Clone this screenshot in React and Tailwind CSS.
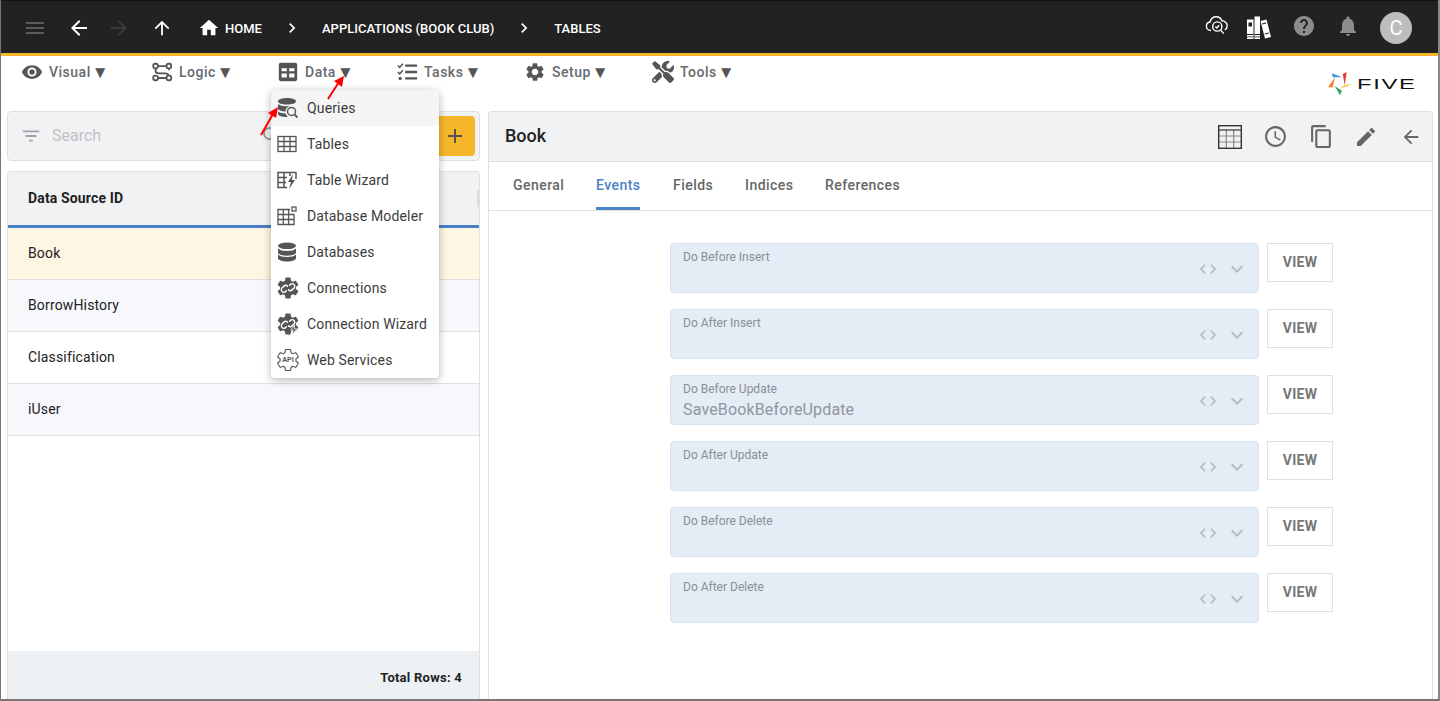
import {
  MdMenu, MdArrowBack, MdArrowForward, MdArrowUpward, MdHome, MdChevronRight, MdHelp, MdNotifications,
  MdVisibility, MdSettings, MdFilterList, MdSearch, MdAdd, MdAccessTime, MdContentCopy,
  MdEdit, MdCode, MdExpandMore,
} from 'react-icons/md';
import { FaTools } from 'react-icons/fa';

const GEAR = 'M19.14 12.94c.04-.3.06-.61.06-.94 0-.32-.02-.64-.07-.94l2.03-1.58c.18-.14.23-.41.12-.61l-1.92-3.32c-.12-.22-.37-.29-.59-.22l-2.39.96c-.5-.38-1.03-.7-1.62-.94l-.36-2.54c-.04-.24-.24-.41-.48-.41h-3.84c-.24 0-.43.17-.47.41l-.36 2.54c-.59.24-1.13.57-1.62.94l-2.39-.96c-.22-.08-.47 0-.59.22L2.74 8.87c-.12.21-.08.47.12.61l2.03 1.58c-.05.3-.09.63-.09.94s.02.64.07.94l-2.03 1.58c-.18.14-.23.41-.12.61l1.92 3.32c.12.22.37.29.59.22l2.39-.96c.5.38 1.03.7 1.62.94l.36 2.54c.05.24.24.41.48.41h3.84c.24 0 .44-.17.47-.41l.36-2.54c.59-.24 1.13-.56 1.62-.94l2.39.96c.22.08.47 0 .59-.22l1.92-3.32c.12-.22.07-.47-.12-.61l-2.01-1.58z';

const LogicIcon = () => (
  <svg viewBox="0 0 24 24" className="w-[22px] h-[22px]" fill="none" stroke="#555" strokeWidth="2">
    <rect x="2.500" y="3" width="5" height="5" rx="2" />
    <rect x="17" y="3" width="5" height="5" rx="2" />
    <rect x="2.500" y="16" width="5" height="5" rx="2" />
    <rect x="17" y="16" width="5" height="5" rx="2" />
    <path d="M7.500 5.500H17M5 8v3c0 2 2 2.500 4 2.500h6c2 0 4 .5 4 2.500M7.500 18.500H17M19.500 8v2" />
  </svg>
);

const DataIcon = () => (
  <svg viewBox="0 0 24 24" className="w-[22px] h-[22px]">
    <path fillRule="evenodd" fill="#555" d="M4 2h16a2 2 0 0 1 2 2v16a2 2 0 0 1-2 2H4a2 2 0 0 1-2-2V4a2 2 0 0 1 2-2zm1 6v3.300h5.700V8H5zm8.300 0v3.300H19V8h-5.700zM5 13.700V18h5.700v-4.300H5zm8.300 0V18H19v-4.300h-5.700z" />
  </svg>
);

const TasksIcon = () => (
  <svg viewBox="0 0 24 24" className="w-[22px] h-[22px]" fill="none" stroke="#555">
    <path strokeWidth="2.500" d="M10 5h13M10 12h13M10 19h13" />
    <path strokeWidth="1.600" d="M2 5l2 2 3.500-4M2 12l2 2 3.500-4" />
    <circle cx="4.500" cy="19" r="1.800" fill="#555" stroke="none" />
  </svg>
);

const CloudIcon = () => (
  <svg viewBox="0 0 24 24" className="w-[24px] h-[24px]" fill="none" stroke="#fff" strokeWidth="1.400">
    <path d="M6 17.500c-2.600 0-4.600-1.800-4.600-4.300 0-2.200 1.500-3.900 3.600-4.200C5.800 6 8.200 3.800 11.200 3.800c2.600 0 4.800 1.600 5.700 4 2.800.1 5.300 2.200 5.300 5 0 1.700-.9 3.300-2.400 4.100" />
    <circle cx="12.300" cy="13.500" r="4.600" />
    <path d="M10.400 13.500l1.400 1.400 2.400-2.600M15.600 17l3.200 3.600" />
  </svg>
);

const BooksIcon = () => (
  <svg viewBox="0 0 26 26" className="w-[26px] h-[26px]">
    <path fill="#fff" d="M1 4.500h6.500V24H1zM8.500 1.500H14V24H8.500z" />
    <path fill="#fff" d="M14.500 6l6-1.500L25 22l-6 1.500z" />
    <path fill="#222" d="M2.500 7.500h3.500v4H2.500zM1 19h6.500v1H1zM1 21.500h6.500v.8H1zM8.500 19H14v1H8.500zM8.500 21.500H14v.8H8.500zM16 8.500l4-1 .3 1-4 1zM18.700 18.500l4-1 .3 1-4 1z" />
  </svg>
);

const TableGrid = () => (
  <svg viewBox="0 0 20 20" className="w-[20px] h-[20px]" fill="none" stroke="#555" strokeWidth="1.300">
    <path d="M1 7.500h18M1 12.500h18M7 2.500v15M13 2.500v15" />
    <rect x="1" y="2.500" width="18" height="15" />
  </svg>
);

const HeaderTable = () => (
  <svg viewBox="0 0 24 24" className="w-[24px] h-[24px]" fill="none">
    <path stroke="#888" strokeWidth="1.200" d="M1 11h22M1 17h22M8.300 5v18M15.700 5v18" />
    <path stroke="#333" strokeWidth="1.200" d="M1 5h22" />
    <rect x="0.700" y="0.700" width="22.600" height="22.600" stroke="#333" strokeWidth="1.400" />
  </svg>
);

const QueriesIcon = () => (
  <svg viewBox="0 0 22 22" className="w-[22px] h-[22px]">
    <path fill="#555" d="M10 1c5 0 9 1.300 9 3.300S15 7.600 10 7.600 1 6.300 1 4.300 5 1 10 1zM1 7c1.500 1.600 5 2.300 9 2.300 1 0 2-.1 3-.2-2.500.6-4.500 2.800-4.500 5.400H8C5 14.300 2.300 13.600 1 12.300zM1 14.500c1.400 1.300 4.300 2 7.600 2 .3 1.100 1 2.200 1.800 3-.2.500-.4.500-.4.500-5 0-9-1.300-9-3.300z" />
    <circle cx="14.500" cy="14.500" r="4" fill="none" stroke="#555" strokeWidth="1.500" />
    <path d="M17.500 17.500l3 3" stroke="#555" strokeWidth="1.800" />
  </svg>
);

const WizardIcon = () => (
  <svg viewBox="0 0 20 20" className="w-[20px] h-[20px]">
    <g fill="none" stroke="#555" strokeWidth="1.500">
      <path d="M10 17.500H1v-15h18V9M1 7.500h9M1 12.500h8M7 2.500v15M13 2.500V6" />
    </g>
    <path fill="#555" d="M16 4l-5 8h3l-2 7 6-9h-3.200z" />
  </svg>
);

const ModelerIcon = () => (
  <svg viewBox="0 0 20 20" className="w-[20px] h-[20px]" fill="none" stroke="#555" strokeWidth="1.300">
    <path d="M13 3.500H1v15h16V8M1 8.500h16M1 13.500h16M6.300 3.500v15M11.600 3.500v15" />
    <rect x="15" y="1" width="4" height="4" />
  </svg>
);

const DatabaseIcon = () => (
  <svg viewBox="0 0 20 20" className="w-[20px] h-[20px]" fill="#555">
    <ellipse cx="10" cy="3.800" rx="9" ry="3.300" />
    <path d="M1 6.500c1.500 1.700 5 2.500 9 2.500s7.500-.8 9-2.500v4c0 1.800-4 3.200-9 3.200s-9-1.400-9-3.200z" />
    <path d="M1 12.600c1.500 1.700 5 2.500 9 2.500s7.500-.8 9-2.500v3.600c0 1.800-4 3.200-9 3.200s-9-1.400-9-3.200z" />
  </svg>
);

const ConnectionIcon = ({ bolt }) => (
  <svg viewBox="2 2 20 20" className="w-[22px] h-[22px]">
    <path fill="#555" d={GEAR} />
    <circle cx="12" cy="12" r="6" fill="#555" />
    <g fill="none" stroke="#fff" strokeWidth="1.300" strokeLinecap="round">
      <path d="M10.500 14.500l-1 1a2.300 2.300 0 0 1-3.200-3.200l2-2a2.300 2.300 0 0 1 3.200 0" />
      <path d="M13.500 9.500l1-1a2.300 2.300 0 0 1 3.200 3.200l-2 2a2.300 2.300 0 0 1-3.200 0" />
    </g>
    {bolt && <path fill="#555" stroke="#fff" strokeWidth="0.700" d="M18 13l-3.500 4.500h2.200L15.500 22l4.500-5.500h-2.200z" />}
  </svg>
);

const ApiIcon = () => (
  <svg viewBox="2 2 20 20" className="w-[22px] h-[22px]">
    <path fill="none" stroke="#555" strokeWidth="1" d={GEAR} />
    <text x="12" y="14.200" textAnchor="middle" fontSize="6.500" fontWeight="700" fill="#555" fontFamily="Roboto, sans-serif">API</text>
  </svg>
);

const FiveLogo = () => (
  <div className="flex items-center">
    <svg viewBox="0 0 25 24" className="w-[25px] h-[24px]">
      <path fill="#4a8fe7" d="M4 1.300L14 5.300 4.700 5.300z" />
      <path fill="#e53935" d="M18.700 0L16.700 13.300 14.700 2z" />
      <path fill="#f9b62a" d="M24 12L12 16.700 17 13z" />
      <path fill="#3da35a" d="M6.700 14L14 18.700 12 23.300z" />
      <path fill="#f5822a" d="M7 5.300L0 15.300 4.700 15.300z" />
    </svg>
    <span className="ml-[4px] w-[60px] text-[14px] leading-none tracking-[1px] text-[#111] origin-left scale-x-[1.7] font-['Liberation_Sans',sans-serif]">FIVE</span>
  </div>
);

const tools = [
  { label: 'Visual', icon: <MdVisibility size={22} color="#555" />, w: 'w-[130px]' },
  { label: 'Logic', icon: <LogicIcon />, w: 'w-[126px]' },
  { label: 'Data', icon: <DataIcon />, w: 'w-[119px]' },
  { label: 'Tasks', icon: <TasksIcon />, w: 'w-[128px]' },
  { label: 'Setup', icon: <MdSettings size={22} color="#555" />, w: 'w-[128px]' },
  { label: 'Tools', icon: <FaTools size={22} color="#555" />, w: 'w-[100px]' },
];

const menuItems = [
  { label: 'Queries', icon: <QueriesIcon />, active: true },
  { label: 'Tables', icon: <TableGrid /> },
  { label: 'Table Wizard', icon: <WizardIcon /> },
  { label: 'Database Modeler', icon: <ModelerIcon /> },
  { label: 'Databases', icon: <DatabaseIcon /> },
  { label: 'Connections', icon: <ConnectionIcon /> },
  { label: 'Connection Wizard', icon: <ConnectionIcon bolt /> },
  { label: 'Web Services', icon: <ApiIcon /> },
];

const rows = [
  { name: 'Book', bg: 'bg-[#fff5e3]' },
  { name: 'BorrowHistory', bg: 'bg-[#f6f8fb]' },
  { name: 'Classification', bg: 'bg-white' },
  { name: 'iUser', bg: 'bg-[#f6f8fb]' },
];

const events = [
  { label: 'Do Before Insert' },
  { label: 'Do After Insert' },
  { label: 'Do Before Update', value: 'SaveBookBeforeUpdate' },
  { label: 'Do After Update' },
  { label: 'Do Before Delete' },
  { label: 'Do After Delete' },
];

const tabs = [
  { label: 'General', w: 'w-[83px]' },
  { label: 'Events', w: 'w-[77px]', active: true },
  { label: 'Fields', w: 'w-[72px]' },
  { label: 'Indices', w: 'w-[80px]' },
  { label: 'References', w: 'w-[80px]' },
];

const App = () => (
  <div className="relative w-[1440px] h-[701px] overflow-hidden bg-white border-l border-l-[#777] border-r-2 border-r-[#888] border-b-2 border-b-[#777] font-['Roboto',sans-serif]">
    {/* Top bar */}
    <header className="h-[56px] bg-[#222] border-t border-t-[#111] border-b-[3px] border-b-[#f6b72a] flex items-center pt-[2px] pl-[22px] pr-[26px]">
      <MdMenu size={24} color="#5c5c5c" />
      <MdArrowBack size={24} color="#fff" className="ml-[20px]" />
      <MdArrowForward size={24} color="#3a3a3a" className="ml-[16px]" />
      <MdArrowUpward size={22} color="#fff" className="ml-[20px]" />
      <MdHome size={22} color="#fff" className="ml-[25px]" />
      <span className="ml-[5px] pt-[1px] text-[13px] font-medium text-white">HOME</span>
      <MdChevronRight size={20} color="#fff" className="ml-[20px]" />
      <span className="ml-[20px] pt-[1px] text-[13px] font-medium tracking-[0.03px] text-white">APPLICATIONS (BOOK CLUB)</span>
      <MdChevronRight size={20} color="#fff" className="ml-[20px]" />
      <span className="ml-[20px] pt-[1px] text-[13px] font-medium text-white">TABLES</span>
      <div className="ml-auto flex items-center">
        <div className="mb-[6px]"><CloudIcon /></div>
        <div className="ml-[17px]"><BooksIcon /></div>
        <MdHelp size={24} color="#8c8c8c" className="ml-[20px] mb-[4px]" />
        <MdNotifications size={24} color="#8c8c8c" className="ml-[20px] mb-[4px]" />
        <div className="ml-[20px] w-[32px] h-[32px] rounded-full bg-[#bdbdbd] flex items-center justify-center text-white text-[20px]">C</div>
      </div>
    </header>

    {/* Toolbar */}
    <nav className="relative h-[55px] flex items-start pt-[5px] pl-[20px]">
      {tools.map((t) => (
        <div key={t.label} className={`${t.w} flex items-center h-[22px] shrink-0`}>
          {t.icon}
          <span className="ml-[6px] text-[14px] font-medium tracking-[0.5px] text-[#666b70]">{t.label}</span>
          <span className="ml-[1px] text-[17px] leading-none text-[#555]">▼</span>
        </div>
      ))}
      <div className="absolute left-[1327px] top-[16px]"><FiveLogo /></div>
    </nav>

    <main className="flex items-stretch gap-[8px] pl-[6px] h-[588px]">
      {/* Left column */}
      <section className="w-[473px] flex flex-col gap-[10px] shrink-0">
        <div className="h-[50px] bg-[#f1f2f4] border border-[#e0e0e0] rounded flex items-center pl-[12px] pr-[4px]">
          <MdFilterList size={22} color="#a0a4a8" />
          <span className="ml-[10px] text-[16px] text-[#c0c2c5]">Search</span>
          <MdSearch size={24} color="#999" className="ml-auto mr-[151px]" />
          <div className="w-[40px] h-[40px] bg-[#f6b72a] rounded-r flex items-center justify-center">
            <MdAdd size={24} color="#555" />
          </div>
        </div>
        <div className="flex-1 flex flex-col border border-[#e0e0e0] border-b-0 rounded-t bg-white">
          <div className="relative h-[56px] bg-[#f1f2f4] border-b-[3px] border-b-[#4a80c8] flex items-center pl-[20px]">
            <span className="text-[14px] font-bold tracking-[0.15px] text-[#222]">Data Source ID</span>
            <span className="absolute right-0 top-[18px] w-[2px] h-[17px] bg-[#ddd]"></span>
          </div>
          {rows.map((r) => (
            <div key={r.name} className={`h-[52px] ${r.bg} border-b border-b-[#e0e0e0] flex items-center pl-[20px] text-[14px] tracking-[0.15px] text-[#222]`}>
              {r.name}
            </div>
          ))}
          <div className="mt-auto h-[48px] bg-[#eef1f3] flex items-center justify-end pt-[5px] pr-[17px] text-[13px] font-bold tracking-[0.25px] text-[#222]">
            Total Rows: 4
          </div>
        </div>
      </section>

      {/* Right panel */}
      <section className="w-[945px] shrink-0 border border-[#e0e0e0] border-b-0 rounded-t flex flex-col">
        <div className="h-[49px] bg-[#f1f2f4] flex items-center pl-[16px]">
          <span className="pb-[2px] text-[18px] font-medium text-[#222]">Book</span>
          <div className="ml-auto flex items-center pr-[10px]">
            <HeaderTable />
            <MdAccessTime size={25} color="#666" className="ml-[21px]" />
            <MdContentCopy size={25} color="#666" className="ml-[21px]" />
            <MdEdit size={24} color="#666" className="ml-[20px]" />
            <MdArrowBack size={22} color="#666" className="ml-[22px]" />
          </div>
        </div>
        <div className="h-[50px] border-t border-t-[#e0e0e0] border-b border-b-[#e0e0e0] flex pl-[24px]">
          {tabs.map((t) => (
            <div key={t.label} className={`${t.w} h-full shrink-0`}>
              <span className={`inline-flex items-center h-full text-[14px] font-medium tracking-[0.45px] ${t.active ? 'text-[#4a82c8] border-b-[3px] border-b-[#4a82c8] pt-[1px]' : 'text-[#666] pb-[2px]'}`}>
                {t.label}
              </span>
            </div>
          ))}
        </div>
        <div className="pt-[32px] pl-[181px] flex flex-col gap-[16px]">
          {events.map((e) => (
            <div key={e.label} className="flex items-start gap-[8px]">
              <div className="relative w-[589px] h-[50px] bg-[#e4ecf5] border border-[#d5e2f0] rounded px-[12px] pt-[6px]">
                <div className="text-[12px] leading-[14px] text-[#8a8f96]">{e.label}</div>
                {e.value && <div className="text-[16px] leading-[20px] mt-[4px] tracking-[0.15px] text-[#9096a0]">{e.value}</div>}
                <div className="absolute right-[9px] top-[13px] flex items-center gap-[7px]">
                  <MdCode size={20} color="#b5bcc4" />
                  <MdExpandMore size={24} color="#b5bcc4" />
                </div>
              </div>
              <div className="w-[66px] h-[39px] border border-[#e0e0e0] flex items-center justify-center text-[14px] font-bold tracking-[0.3px] text-[#777] bg-white">VIEW</div>
            </div>
          ))}
        </div>
      </section>
    </main>

    {/* Data menu */}
    <div className="absolute left-[270px] top-[90px] w-[168px] bg-white rounded shadow-[0_2px_8px_rgba(0,0,0,0.3)]">
      {menuItems.map((m) => (
        <div key={m.label} className={`h-[36px] flex items-center ${m.active ? 'bg-[#f5f5f5]' : ''}`}>
          <div className="w-[36px] pl-[6px] flex justify-start shrink-0">{m.icon}</div>
          <span className="text-[14px] tracking-[0.15px] text-[#3c3c3c]">{m.label}</span>
        </div>
      ))}
    </div>

    {/* Red arrows */}
    <svg className="absolute left-0 top-0 w-[1440px] h-[701px] pointer-events-none" viewBox="0 0 1440 701">
      <path d="M327 99L338 82" stroke="#f00" strokeWidth="2" />
      <path d="M343 76L341 87 333 81z" fill="#f00" />
      <path d="M260 135L272 114" stroke="#f00" strokeWidth="2" />
      <path d="M277 107L275 118 267 113z" fill="#f00" />
    </svg>
  </div>
);

export default App;
